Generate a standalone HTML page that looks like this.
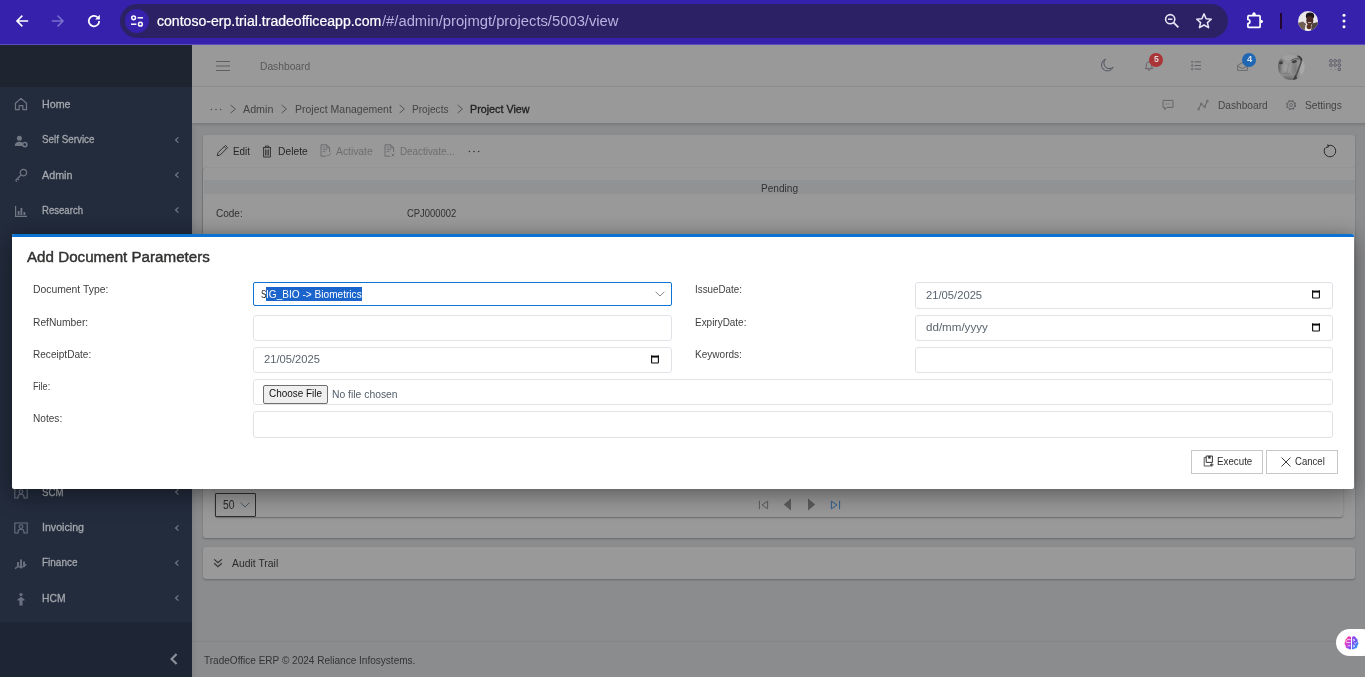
<!DOCTYPE html>
<html><head><meta charset="utf-8"><title>Project View</title>
<style>
html,body{margin:0;padding:0}
body{width:1365px;height:677px;overflow:hidden;position:relative;background:#8b8c8e;font-family:'Liberation Sans',sans-serif;}
svg{display:block;overflow:visible}
</style></head><body>
<div style="position:absolute;left:0px;top:0px;width:1365px;height:44px;background:#3521ac"></div><div style="position:absolute;left:0px;top:44px;width:1365px;height:1px;background:#5b4cc0"></div><svg style="position:absolute;left:14.00px;top:13.00px;" width="16" height="16" viewBox="0 0 16 16"><path d="M13.4 8H3.6M7.8 3.2L3 8L7.8 12.8" fill="none" stroke="#fff" stroke-width="1.6" stroke-linecap="square"/></svg><svg style="position:absolute;left:50.00px;top:13.00px;" width="16" height="16" viewBox="0 0 16 16"><path d="M2.6 8H12.4M8.2 3.2L13 8L8.2 12.8" fill="none" stroke="#7a6fcf" stroke-width="1.6" stroke-linecap="square"/></svg><svg style="position:absolute;left:86.00px;top:13.00px;" width="16" height="16" viewBox="0 0 16 16"><path d="M13.2 8A5.2 5.2 0 1 1 11.6 4.3" fill="none" stroke="#fff" stroke-width="1.7"/><path d="M13.8 1.8V6.4H9.2Z" fill="#fff"/></svg><div style="position:absolute;left:120px;top:4px;width:1108px;height:34px;background:#2c2165;border-radius:17px"></div><div style="position:absolute;left:125px;top:9px;width:24px;height:24px;background:#3521ac;border-radius:12px"></div><svg style="position:absolute;left:129.00px;top:13.00px;" width="16" height="16" viewBox="0 0 16 16"><circle cx="4.6" cy="4.8" r="1.9" fill="none" stroke="#fff" stroke-width="1.5"/><path d="M8.6 4.8H14" stroke="#fff" stroke-width="1.5"/><circle cx="11.4" cy="11.2" r="1.9" fill="none" stroke="#fff" stroke-width="1.5"/><path d="M2 11.2H7.4" stroke="#fff" stroke-width="1.5"/></svg><span style="position:absolute;left:157.30px;top:11.25px;line-height:20px;font-size:14px;font-weight:400;color:#ffffff;white-space:pre;transform-origin:0 50%;transform:scaleX(1.0050);-webkit-text-stroke:.22px #fff;">contoso-erp.trial.tradeofficeapp.com</span><span style="position:absolute;left:381.80px;top:11.25px;line-height:20px;font-size:14px;font-weight:400;color:#b9b3e0;white-space:pre;transform-origin:0 50%;transform:scaleX(1.0553);">/#/admin/projmgt/projects/5003/view</span><svg style="position:absolute;left:1163.00px;top:12.00px;" width="18" height="18" viewBox="0 0 18 18"><circle cx="7.2" cy="7.2" r="4.6" fill="none" stroke="#e9e6f7" stroke-width="1.6"/><path d="M10.6 10.6L15.4 15.4" stroke="#e9e6f7" stroke-width="1.8"/><path d="M5 7.2H9.4" stroke="#e9e6f7" stroke-width="1.5"/></svg><svg style="position:absolute;left:1195.00px;top:12.00px;" width="18" height="18" viewBox="0 0 18 18"><path d="M9 1.9L11.1 6.7L16.3 7.2L12.4 10.6L13.6 15.7L9 13L4.4 15.7L5.6 10.6L1.7 7.2L6.9 6.7Z" fill="none" stroke="#e9e6f7" stroke-width="1.5" stroke-linejoin="round"/></svg><svg style="position:absolute;left:1245.00px;top:10.50px;" width="20" height="20" viewBox="0 0 20 20"><path d="M2.9 5.7Q2.9 4.7 3.9 4.7H14.1Q15.1 4.7 15.1 5.7V15.4Q15.1 16.4 14.1 16.4H3.9Q2.9 16.4 2.9 15.4V12.5A2 2 0 0 0 2.9 8.5Z" fill="none" stroke="#fff" stroke-width="1.7" stroke-linejoin="round"/><path d="M7.2 4.2A1.8 2.9 0 0 1 10.8 4.2ZM15.6 8.7A2.5 1.8 0 0 1 15.6 12.3Z" fill="#fff"/></svg><div style="position:absolute;left:1280px;top:13px;width:2px;height:16px;background:#22062f"></div><svg style="position:absolute;left:1298.00px;top:11.00px;" width="20" height="20" viewBox="0 0 20 20"><defs><clipPath id="ca"><circle cx="10" cy="10" r="10"/></clipPath><filter id="fb" x="-20%" y="-20%" width="140%" height="140%"><feGaussianBlur stdDeviation=".55"/></filter></defs><g clip-path="url(#ca)"><rect width="20" height="20" fill="#e9e7e8"/><g filter="url(#fb)"><path d="M0 12L5 10.5L8 13L7 20H0Z" fill="#6f5f55"/><path d="M14 12.5L20 11V20H13Z" fill="#4f4540"/><path d="M7.5 14L12.5 14L13 20H6.5Z" fill="#f3f1f0"/><ellipse cx="12" cy="5" rx="4.2" ry="3.4" fill="#1d181b"/><ellipse cx="11.8" cy="9.6" rx="3.5" ry="4.4" fill="#4a2c25"/><ellipse cx="11" cy="15.6" rx="2.4" ry="2.6" fill="#5a3428"/><path d="M10 11.6H13.4" stroke="#d8c8c4" stroke-width=".9"/></g></g></svg><svg style="position:absolute;left:1341.00px;top:12.00px;" width="6" height="18" viewBox="0 0 6 18"><circle cx="3" cy="3.2" r="1.5" fill="#fff"/><circle cx="3" cy="9" r="1.5" fill="#fff"/><circle cx="3" cy="14.8" r="1.5" fill="#fff"/></svg><div style="position:absolute;left:0px;top:45px;width:192px;height:42px;background:#1e2430"></div><div style="position:absolute;left:0px;top:87px;width:192px;height:535px;background:#232c3d"></div><div style="position:absolute;left:0px;top:622px;width:192px;height:55px;background:#1e2535"></div><svg style="position:absolute;left:13.00px;top:96.40px;" width="16" height="16" viewBox="0 0 16 16"><path d="M2.5 7.2L8 2.4L13.5 7.2V13.6H9.8V9.6H6.2V13.6H2.5Z" fill="none" stroke="#727883" stroke-width="1.2" stroke-linejoin="round"/></svg><span style="position:absolute;left:42.00px;top:94.20px;line-height:20px;font-size:11px;font-weight:400;-webkit-text-stroke:0.31px #a4a7ac;color:#a4a7ac;white-space:pre;transform-origin:0 50%;transform:scaleX(0.9712);">Home</span><svg style="position:absolute;left:13.00px;top:132.65px;" width="16" height="16" viewBox="0 0 16 16"><circle cx="6.4" cy="5.2" r="2.5" fill="#727883"/><path d="M1.8 13C1.8 10.2 3.6 8.8 6.4 8.8C7.6 8.8 8.6 9.1 9.3 9.6V13Z" fill="#727883"/><circle cx="11.8" cy="11.6" r="2.1" fill="none" stroke="#727883" stroke-width="1.5"/></svg><span style="position:absolute;left:42.00px;top:129.45px;line-height:20px;font-size:11px;font-weight:400;-webkit-text-stroke:0.31px #a4a7ac;color:#a4a7ac;white-space:pre;transform-origin:0 50%;transform:scaleX(0.8943);">Self Service</span><svg style="position:absolute;left:173.20px;top:135.85px;" width="8" height="8" viewBox="0 0 8 8"><path d="M5.4 1.4L2.6 4L5.4 6.6" fill="none" stroke="#727883" stroke-width="1.2"/></svg><svg style="position:absolute;left:13.00px;top:166.90px;" width="16" height="16" viewBox="0 0 16 16"><circle cx="10.4" cy="5.6" r="3.2" fill="none" stroke="#727883" stroke-width="1.2"/><path d="M8 8L2.6 13.4M4.4 11.6L6 13.2M2.6 13.4L3.8 14.6" fill="none" stroke="#727883" stroke-width="1.2"/></svg><span style="position:absolute;left:42.00px;top:164.70px;line-height:20px;font-size:11px;font-weight:400;-webkit-text-stroke:0.31px #a4a7ac;color:#a4a7ac;white-space:pre;transform-origin:0 50%;transform:scaleX(0.9780);">Admin</span><svg style="position:absolute;left:173.20px;top:171.10px;" width="8" height="8" viewBox="0 0 8 8"><path d="M5.4 1.4L2.6 4L5.4 6.6" fill="none" stroke="#727883" stroke-width="1.2"/></svg><svg style="position:absolute;left:13.00px;top:203.15px;" width="16" height="16" viewBox="0 0 16 16"><path d="M2.6 3V13.4H14" fill="none" stroke="#727883" stroke-width="1.2"/><path d="M5.6 8V12M8.4 5V12M11.4 9V12" stroke="#727883" stroke-width="1.8"/></svg><span style="position:absolute;left:42.00px;top:199.95px;line-height:20px;font-size:11px;font-weight:400;-webkit-text-stroke:0.31px #a4a7ac;color:#a4a7ac;white-space:pre;transform-origin:0 50%;transform:scaleX(0.8709);">Research</span><svg style="position:absolute;left:173.20px;top:206.35px;" width="8" height="8" viewBox="0 0 8 8"><path d="M5.4 1.4L2.6 4L5.4 6.6" fill="none" stroke="#727883" stroke-width="1.2"/></svg><svg style="position:absolute;left:13.00px;top:485.15px;" width="16" height="16" viewBox="0 0 16 16"><path d="M5 13H1.8V3H14.2V13H11" fill="none" stroke="#69707d" stroke-width="1.1"/><circle cx="8" cy="6.6" r="1.9" fill="none" stroke="#69707d" stroke-width="1.1"/><path d="M5 13.4V12C5 10.2 6.2 9.2 8 9.2C9.8 9.2 11 10.2 11 12V13.4" fill="none" stroke="#69707d" stroke-width="1.1"/></svg><span style="position:absolute;left:42.00px;top:481.95px;line-height:20px;font-size:11px;font-weight:400;-webkit-text-stroke:0.31px #a4a7ac;color:#a4a7ac;white-space:pre;transform-origin:0 50%;transform:scaleX(0.8792);">SCM</span><svg style="position:absolute;left:173.20px;top:488.35px;" width="8" height="8" viewBox="0 0 8 8"><path d="M5.4 1.4L2.6 4L5.4 6.6" fill="none" stroke="#727883" stroke-width="1.2"/></svg><svg style="position:absolute;left:13.00px;top:520.40px;" width="16" height="16" viewBox="0 0 16 16"><path d="M5 13H1.8V3H14.2V13H11" fill="none" stroke="#69707d" stroke-width="1.1"/><circle cx="8" cy="6.6" r="1.9" fill="none" stroke="#69707d" stroke-width="1.1"/><path d="M5 13.4V12C5 10.2 6.2 9.2 8 9.2C9.8 9.2 11 10.2 11 12V13.4" fill="none" stroke="#69707d" stroke-width="1.1"/></svg><span style="position:absolute;left:42.00px;top:517.20px;line-height:20px;font-size:11px;font-weight:400;-webkit-text-stroke:0.31px #a4a7ac;color:#a4a7ac;white-space:pre;transform-origin:0 50%;transform:scaleX(0.9673);">Invoicing</span><svg style="position:absolute;left:173.20px;top:523.60px;" width="8" height="8" viewBox="0 0 8 8"><path d="M5.4 1.4L2.6 4L5.4 6.6" fill="none" stroke="#727883" stroke-width="1.2"/></svg><svg style="position:absolute;left:13.00px;top:555.65px;" width="16" height="16" viewBox="0 0 16 16"><path d="M4 6H6V11H4ZM7 3.6H9V11H7ZM10 5.4H12V11H10Z" fill="#69707d"/><path d="M2 12.6L5.4 10.2L8 12L13.4 8.4" fill="none" stroke="#69707d" stroke-width="1.4"/></svg><span style="position:absolute;left:42.00px;top:552.45px;line-height:20px;font-size:11px;font-weight:400;-webkit-text-stroke:0.31px #a4a7ac;color:#a4a7ac;white-space:pre;transform-origin:0 50%;transform:scaleX(0.9070);">Finance</span><svg style="position:absolute;left:173.20px;top:558.85px;" width="8" height="8" viewBox="0 0 8 8"><path d="M5.4 1.4L2.6 4L5.4 6.6" fill="none" stroke="#727883" stroke-width="1.2"/></svg><svg style="position:absolute;left:13.00px;top:590.90px;" width="16" height="16" viewBox="0 0 16 16"><circle cx="8" cy="3.6" r="1.7" fill="#69707d"/><path d="M4.4 8.4L8 5.8L11.6 8.4V9.6H9.6V14.4H6.4V9.6H4.4Z" fill="#69707d"/></svg><span style="position:absolute;left:42.00px;top:587.70px;line-height:20px;font-size:11px;font-weight:400;-webkit-text-stroke:0.31px #a4a7ac;color:#a4a7ac;white-space:pre;transform-origin:0 50%;transform:scaleX(0.9377);">HCM</span><svg style="position:absolute;left:173.20px;top:594.10px;" width="8" height="8" viewBox="0 0 8 8"><path d="M5.4 1.4L2.6 4L5.4 6.6" fill="none" stroke="#727883" stroke-width="1.2"/></svg><svg style="position:absolute;left:167.50px;top:651.50px;" width="12" height="14" viewBox="0 0 12 14"><path d="M8.6 2L3.6 7L8.6 12" fill="none" stroke="#8b909a" stroke-width="2.2"/></svg><div style="position:absolute;left:192px;top:45px;width:1173px;height:78px;background:#999999"></div><div style="position:absolute;left:192px;top:86px;width:1173px;height:1px;background:#8c8c8c"></div><div style="position:absolute;left:192px;top:123px;width:1173px;height:4px;background:linear-gradient(180deg,#78797b,#8b8c8e)"></div><div style="position:absolute;left:192px;top:127px;width:1173px;height:550px;background:#8b8c8e"></div><svg style="position:absolute;left:216.00px;top:59.50px;" width="14" height="12" viewBox="0 0 14 12"><path d="M0 1.5H14M0 6H14M0 10.5H14" stroke="#5f5f5f" stroke-width="1.1"/></svg><span style="position:absolute;left:259.80px;top:56.20px;line-height:20px;font-size:11px;font-weight:400;color:#595959;white-space:pre;transform-origin:0 50%;transform:scaleX(0.9326);">Dashboard</span><svg style="position:absolute;left:210.00px;top:107.50px;" width="12" height="3" viewBox="0 0 12 3"><circle cx="1.4" cy="1.5" r=".75" fill="#505050"/><circle cx="6" cy="1.5" r=".75" fill="#505050"/><circle cx="10.6" cy="1.5" r=".75" fill="#505050"/></svg><svg style="position:absolute;left:228.60px;top:104.20px;" width="8" height="10" viewBox="0 0 8 10"><path d="M1.6 .9L6.4 5L1.6 9.1" fill="none" stroke="#555" stroke-width="1"/></svg><span style="position:absolute;left:243.00px;top:99.20px;line-height:20px;font-size:11px;font-weight:400;color:#444;white-space:pre;transform-origin:0 50%;transform:scaleX(0.9747);">Admin</span><svg style="position:absolute;left:280.00px;top:104.20px;" width="8" height="10" viewBox="0 0 8 10"><path d="M1.6 .9L6.4 5L1.6 9.1" fill="none" stroke="#555" stroke-width="1"/></svg><span style="position:absolute;left:294.50px;top:99.20px;line-height:20px;font-size:11px;font-weight:400;color:#444;white-space:pre;transform-origin:0 50%;transform:scaleX(0.9537);">Project Management</span><svg style="position:absolute;left:398.30px;top:104.20px;" width="8" height="10" viewBox="0 0 8 10"><path d="M1.6 .9L6.4 5L1.6 9.1" fill="none" stroke="#555" stroke-width="1"/></svg><span style="position:absolute;left:412.40px;top:99.20px;line-height:20px;font-size:11px;font-weight:400;color:#444;white-space:pre;transform-origin:0 50%;transform:scaleX(0.9182);">Projects</span><svg style="position:absolute;left:455.60px;top:104.20px;" width="8" height="10" viewBox="0 0 8 10"><path d="M1.6 .9L6.4 5L1.6 9.1" fill="none" stroke="#555" stroke-width="1"/></svg><span style="position:absolute;left:470.00px;top:99.20px;line-height:20px;font-size:11px;font-weight:400;-webkit-text-stroke:0.31px #1e1e1e;color:#1e1e1e;white-space:pre;transform-origin:0 50%;transform:scaleX(0.9764);">Project View</span><svg style="position:absolute;left:1100.40px;top:58.40px;" width="14" height="14" viewBox="0 0 14 14"><path d="M5.6 1.2A6 6 0 1 0 13 9.2A5.2 5.2 0 0 1 5.6 1.2Z" fill="none" stroke="#50545f" stroke-width="1" stroke-linejoin="round"/></svg><svg style="position:absolute;left:1144.20px;top:60.80px;" width="10" height="10" viewBox="0 0 10 10"><path d="M5 .8C3.4 .8 2.4 2 2.4 3.6V5.8L1.2 7.6H8.8L7.6 5.8V3.6C7.6 2 6.6 .8 5 .8ZM4 8.4A1 1 0 0 0 6 8.4" fill="none" stroke="#606066" stroke-width=".95"/></svg><div style="position:absolute;left:1149px;top:53px;width:14px;height:14px;background:#a93538;border-radius:7px"></div><span style="position:absolute;left:1153.80px;top:49.46px;line-height:20px;font-size:9px;font-weight:700;color:#e0d6d7;white-space:pre;transform-origin:0 50%;transform:scaleX(0.9570);">5</span><svg style="position:absolute;left:1191.00px;top:60.80px;" width="10" height="9" viewBox="0 0 10 9"><path d="M3.6 .9H10M3.6 4.5H10M3.6 8.1H10" stroke="#5a5a60" stroke-width=".9"/><circle cx="1.2" cy=".9" r=".8" fill="none" stroke="#5a5a60" stroke-width=".7"/><circle cx="1.2" cy="4.5" r=".8" fill="none" stroke="#5a5a60" stroke-width=".7"/><circle cx="1.2" cy="8.1" r=".8" fill="none" stroke="#5a5a60" stroke-width=".7"/></svg><svg style="position:absolute;left:1237.00px;top:61.70px;" width="11" height="9" viewBox="0 0 11 9"><path d="M.6 3.4L5.5 .5L10.4 3.4V8.5H.6ZM.6 4.2L5.5 6.6L10.4 4.2" fill="none" stroke="#66666c" stroke-width=".9"/></svg><div style="position:absolute;left:1242px;top:53px;width:14px;height:14px;background:#2067b3;border-radius:7px"></div><span style="position:absolute;left:1246.50px;top:49.46px;line-height:20px;font-size:9px;font-weight:700;color:#d6e0ea;white-space:pre;transform-origin:0 50%;transform:scaleX(1.0368);">4</span><svg style="position:absolute;left:1277.70px;top:52.90px;" width="27" height="27" viewBox="0 0 27 27"><defs><clipPath id="cb"><circle cx="13.5" cy="13.5" r="13.5"/></clipPath><filter id="fc" x="-20%" y="-20%" width="140%" height="140%"><feGaussianBlur stdDeviation=".75"/></filter><filter id="fd" x="-30%" y="-30%" width="160%" height="160%"><feGaussianBlur stdDeviation="1.6"/></filter></defs><g clip-path="url(#cb)"><rect width="27" height="27" fill="#8e8e8e"/><g filter="url(#fd)"><ellipse cx="11" cy="4.5" rx="8" ry="4" fill="#a0a0a0"/><ellipse cx="8.5" cy="15" rx="4.5" ry="5" fill="#9c9c9c"/><ellipse cx="24.5" cy="15" rx="3.6" ry="9" fill="#a9a9a9"/><ellipse cx=".5" cy="13" rx="2.6" ry="10" fill="#666"/><ellipse cx="9" cy="26.5" rx="8" ry="3" fill="#6a6a6a"/><ellipse cx="17" cy="16" rx="2.5" ry="6" fill="#7c7c7c"/></g><g filter="url(#fc)"><ellipse cx="3" cy="9.8" rx="2" ry="1.5" fill="#3d3d3d"/><path d="M.5 8.2C2 6.8 4.5 6.8 6.2 8" fill="none" stroke="#6a6a6a" stroke-width=".9"/><ellipse cx="16.4" cy="8.6" rx="2.6" ry="1.5" fill="#404040" transform="rotate(-14 16.4 8.6)"/><path d="M12.8 8C15 5.6 19 5 21.5 6.4" fill="none" stroke="#5e5e5e" stroke-width="1.1"/><path d="M19.5 3C23.2 4.4 24 7.2 22.6 10.4C21 14.4 19.6 20 16 27" fill="none" stroke="#525252" stroke-width="1.7"/><path d="M20.5 3.2C22.2 3.8 23.6 5.2 23.6 7.4" fill="none" stroke="#3a3a3a" stroke-width="1.7"/><path d="M14.6 27L17.6 21.6L19.6 27Z" fill="#404040"/><path d="M10.2 10C10.6 14 10 17 8.6 19.4" fill="none" stroke="#8a8a8a" stroke-width="1.1"/><path d="M5 20.6C7 19.8 9.5 20 11 21.2" fill="none" stroke="#7c7c7c" stroke-width="1.2"/><path d="M6 25.4C8 24.6 11 25 13 26.4" fill="none" stroke="#6f6f6f" stroke-width="1.4"/></g></g></svg><svg style="position:absolute;left:1329.10px;top:59.00px;" width="13" height="13" viewBox="0 0 13 13"><rect x="0.7" y="0.7" width="2.4" height="2.4" rx=".5" fill="none" stroke="#5c5a6a" stroke-width="1"/><rect x="4.9" y="0.7" width="2.4" height="2.4" rx=".5" fill="none" stroke="#5c5a6a" stroke-width="1"/><rect x="9.1" y="0.7" width="2.4" height="2.4" rx=".5" fill="none" stroke="#5c5a6a" stroke-width="1"/><rect x="0.7" y="4.9" width="2.4" height="2.4" rx=".5" fill="none" stroke="#5c5a6a" stroke-width="1"/><rect x="4.9" y="4.9" width="2.4" height="2.4" rx=".5" fill="none" stroke="#5c5a6a" stroke-width="1"/><rect x="9.1" y="4.9" width="2.4" height="2.4" rx=".5" fill="none" stroke="#5c5a6a" stroke-width="1"/><circle cx="1.9" cy="10.3" r=".6" fill="#77707a"/><circle cx="6.1" cy="10.3" r=".6" fill="#77707a"/><rect x="9.1" y="9.1" width="2.4" height="2.4" rx=".5" fill="none" stroke="#5c5a6a" stroke-width="1"/></svg><svg style="position:absolute;left:1162.40px;top:98.50px;" width="12" height="12" viewBox="0 0 12 12"><path d="M1 1.4H11V8.4H5L2.6 10.6V8.4H1Z" fill="none" stroke="#666" stroke-width="1"/><path d="M3.6 5H8.4" stroke="#666" stroke-width="1" stroke-dasharray="1 1.2"/></svg><svg style="position:absolute;left:1196.60px;top:98.80px;" width="12" height="12" viewBox="0 0 12 12"><path d="M1.6 10.2L4.2 4.8L7.6 8L10.4 2" fill="none" stroke="#5a5a5e" stroke-width=".9"/><circle cx="1.6" cy="10.2" r=".9" fill="#999" stroke="#5a5a5e" stroke-width=".7"/><circle cx="4.2" cy="4.8" r=".9" fill="#999" stroke="#5a5a5e" stroke-width=".7"/><circle cx="7.6" cy="8" r=".9" fill="#999" stroke="#5a5a5e" stroke-width=".7"/><circle cx="10.4" cy="2" r=".9" fill="#999" stroke="#5a5a5e" stroke-width=".7"/></svg><span style="position:absolute;left:1217.50px;top:95.20px;line-height:20px;font-size:11px;font-weight:400;color:#454547;white-space:pre;transform-origin:0 50%;transform:scaleX(0.9233);">Dashboard</span><svg style="position:absolute;left:1284.50px;top:98.50px;" width="12" height="12" viewBox="0 0 12 12"><circle cx="6" cy="6" r="4.5" fill="none" stroke="#606064" stroke-width="1.1" stroke-dasharray="2.1 1.43"/><circle cx="6" cy="6" r="3.8" fill="none" stroke="#606064" stroke-width=".8"/><circle cx="6" cy="6" r="1.5" fill="none" stroke="#606064" stroke-width=".8"/></svg><span style="position:absolute;left:1305.20px;top:95.20px;line-height:20px;font-size:11px;font-weight:400;color:#454547;white-space:pre;transform-origin:0 50%;transform:scaleX(0.9258);">Settings</span><div style="position:absolute;left:203px;top:135px;width:1152px;height:403px;background:#999999;border-radius:3px;box-shadow:0 1px 2px rgba(0,0,0,.25)"></div><div style="position:absolute;left:203px;top:168px;width:1152px;height:300px;background:#999;border-top-left-radius:3px;box-shadow:0 -1px 1px rgba(0,0,0,.035),-1px 0 0 rgba(0,0,0,.10)"></div><div style="position:absolute;left:204px;top:180px;width:1151px;height:14px;background:#919294"></div><span style="position:absolute;left:760.50px;top:178.20px;line-height:20px;font-size:11px;font-weight:400;color:#333;white-space:pre;transform-origin:0 50%;transform:scaleX(0.9164);">Pending</span><span style="position:absolute;left:215.50px;top:203.20px;line-height:20px;font-size:11px;font-weight:400;color:#303030;white-space:pre;transform-origin:0 50%;transform:scaleX(0.9094);">Code:</span><span style="position:absolute;left:407.20px;top:203.20px;line-height:20px;font-size:11px;font-weight:400;color:#303030;white-space:pre;transform-origin:0 50%;transform:scaleX(0.8557);">CPJ000002</span><svg style="position:absolute;left:216.30px;top:144.20px;" width="13" height="13" viewBox="0 0 13 13"><path d="M9.4 1.4L11.6 3.6L4.2 11L1.2 11.8L2 8.8Z" fill="none" stroke="#333" stroke-width="1" stroke-linejoin="round"/><path d="M8.2 2.6L10.4 4.8" stroke="#333" stroke-width=".8"/></svg><span style="position:absolute;left:233.20px;top:141.40px;line-height:20px;font-size:11px;font-weight:400;color:#262626;white-space:pre;transform-origin:0 50%;transform:scaleX(0.8962);">Edit</span><svg style="position:absolute;left:262.30px;top:144.50px;" width="10" height="13" viewBox="0 0 10 13"><path d="M.8 2.6H9.2M3.4 2.4V1H6.6V2.4M1.6 2.8V12H8.4V2.8" fill="none" stroke="#333" stroke-width="1"/><path d="M3.8 4.6V10.4M6.2 4.6V10.4" stroke="#333" stroke-width="1.3"/></svg><span style="position:absolute;left:278.30px;top:141.40px;line-height:20px;font-size:11px;font-weight:400;color:#262626;white-space:pre;transform-origin:0 50%;transform:scaleX(0.9341);">Delete</span><svg style="position:absolute;left:319.50px;top:144.30px;" width="11" height="13" viewBox="0 0 11 13"><path d="M1 .8H6.6L9.6 3.8V8M1 .8V12.2H6.2M6.6 .8V3.8H9.6" fill="none" stroke="#6c6c70" stroke-width="1" stroke-linejoin="miter"/><path d="M2.8 5.4H7M2.8 7.6H5.6M2.8 3.2H4.8" stroke="#6c6c70" stroke-width=".9"/><path d="M7 10.6L8.4 12L10.8 9.2" fill="none" stroke="#6c6c70" stroke-width=".9"/></svg><span style="position:absolute;left:335.70px;top:141.40px;line-height:20px;font-size:11px;font-weight:400;color:#6e6e72;white-space:pre;transform-origin:0 50%;transform:scaleX(0.9376);">Activate</span><svg style="position:absolute;left:384.30px;top:144.30px;" width="11" height="13" viewBox="0 0 11 13"><path d="M1 .8H6.6L9.6 3.8V8M1 .8V12.2H6.2M6.6 .8V3.8H9.6" fill="none" stroke="#6c6c70" stroke-width="1" stroke-linejoin="miter"/><path d="M2.8 5.4H7M2.8 7.6H5.6M2.8 3.2H4.8" stroke="#6c6c70" stroke-width=".9"/><path d="M7.6 9.6L10.4 12.4M10.4 9.6L7.6 12.4" fill="none" stroke="#6c6c70" stroke-width=".9"/></svg><span style="position:absolute;left:400.30px;top:141.40px;line-height:20px;font-size:11px;font-weight:400;color:#6e6e72;white-space:pre;transform-origin:0 50%;transform:scaleX(0.8947);">Deactivate...</span><svg style="position:absolute;left:468.40px;top:149.50px;" width="12" height="3" viewBox="0 0 12 3"><circle cx="1.4" cy="1.5" r=".8" fill="#333"/><circle cx="6" cy="1.5" r=".8" fill="#333"/><circle cx="10.6" cy="1.5" r=".8" fill="#333"/></svg><svg style="position:absolute;left:1323.00px;top:144.00px;" width="14" height="14" viewBox="0 0 14 14"><path d="M5.2 1.5A5.8 5.8 0 1 1 2 4" fill="none" stroke="#2a2a2a" stroke-width="1"/><path d="M5.4 .2V2.8H2.6" fill="none" stroke="#2a2a2a" stroke-width="1" transform="rotate(-18 5.4 2.8)"/></svg><div style="position:absolute;left:215px;top:480px;width:1128px;height:37px;background:#999;border-bottom-left-radius:3px;border-bottom-right-radius:3px;box-shadow:0 1px 1.5px rgba(0,0,0,.3)"></div><div style="position:absolute;left:215px;top:493px;width:41px;height:24px;border:1px solid #2e2e2e;box-sizing:border-box;border-radius:1px"></div><span style="position:absolute;left:222.60px;top:495.22px;line-height:20px;font-size:12px;font-weight:400;color:#2a2a2a;white-space:pre;transform-origin:0 50%;transform:scaleX(0.8608);">50</span><svg style="position:absolute;left:240.10px;top:501.60px;" width="10" height="6" viewBox="0 0 10 6"><path d="M.5 .6L5 5L9.5 .6" fill="none" stroke="#4a5866" stroke-width="1"/></svg><svg style="position:absolute;left:757.70px;top:499.80px;" width="11" height="10" viewBox="0 0 11 10"><path d="M1.4 .8V9.2" stroke="#5c5d5f" stroke-width="1"/><path d="M9.6 1.2L4 5L9.6 8.8Z" fill="none" stroke="#5c5d5f" stroke-width="1"/></svg><svg style="position:absolute;left:782.50px;top:498.30px;" width="9" height="13" viewBox="0 0 9 13"><path d="M8 .4L.8 6.5L8 12.6Z" fill="#5c5d5f"/></svg><svg style="position:absolute;left:807.20px;top:498.30px;" width="9" height="13" viewBox="0 0 9 13"><path d="M1 .4L8.2 6.5L1 12.6Z" fill="#5c5d5f"/></svg><svg style="position:absolute;left:829.90px;top:499.80px;" width="11" height="10" viewBox="0 0 11 10"><path d="M9.6 .8V9.2" stroke="#2f5f8f" stroke-width="1"/><path d="M1.4 1.2L7 5L1.4 8.8Z" fill="none" stroke="#2f5f8f" stroke-width="1"/></svg><div style="position:absolute;left:203px;top:547px;width:1152px;height:32px;background:#999999;border-radius:3px;box-shadow:0 1px 2px rgba(0,0,0,.25)"></div><svg style="position:absolute;left:213.30px;top:558.00px;" width="10" height="10" viewBox="0 0 10 10"><path d="M1.2 1.4L5 4.8L8.8 1.4M1.2 5.2L5 8.6L8.8 5.2" fill="none" stroke="#333" stroke-width="1.2"/></svg><span style="position:absolute;left:232.00px;top:553.11px;line-height:20px;font-size:11.5px;font-weight:400;color:#2b2b2b;white-space:pre;transform-origin:0 50%;transform:scaleX(0.9034);">Audit Trail</span><div style="position:absolute;left:192px;top:641px;width:1173px;height:1px;background:#848587"></div><span style="position:absolute;left:204.10px;top:649.51px;line-height:20px;font-size:11.5px;font-weight:400;color:#333436;white-space:pre;transform-origin:0 50%;transform:scaleX(0.8728);">TradeOffice ERP © 2024 Reliance Infosystems.</span><div style="position:absolute;left:192px;top:127px;width:6px;height:550px;background:linear-gradient(90deg,rgba(0,0,0,.06),rgba(0,0,0,0))"></div><div style="position:absolute;left:1336px;top:629px;width:40px;height:27px;background:#fff;border-radius:13.5px"></div><svg style="position:absolute;left:1344.10px;top:635.50px;" width="15" height="14" viewBox="0 0 15 14"><defs><linearGradient id="bl" x1="0" y1="0" x2=".7" y2="1"><stop offset=".08" stop-color="#ff9a2e"/><stop offset=".34" stop-color="#ee3fb4"/><stop offset=".7" stop-color="#c03fe0"/><stop offset="1" stop-color="#7a4cf2"/></linearGradient><linearGradient id="br" x1="0" y1="0" x2=".6" y2="1"><stop offset="0" stop-color="#a14be6"/><stop offset=".55" stop-color="#6a58f5"/><stop offset="1" stop-color="#2f9cff"/></linearGradient></defs><path d="M7 1C5.6 -.2 3.4 .3 3 2.2C1.4 2.8 .9 4.4 1.5 5.6C.2 6.8 .2 8.6 1.6 9.6C1.4 11.6 3 13 4.6 12.6C5.4 13.8 6.6 13.6 7 13Z" fill="url(#bl)"/><path d="M8 1C9.4 -.2 11.6 .3 12 2.2C13.6 2.8 14.1 4.4 13.5 5.6C14.8 6.8 14.8 8.6 13.4 9.6C13.6 11.6 12 13 10.4 12.6C9.600000000000001 13.8 8.4 13.6 8 13Z" fill="url(#br)"/><path d="M3.4 3.6H6.6M2.2 6.6H6.4M3.6 9.8H6.4M3.4 3.6C2.6 4 2.4 4.8 2.6 5.4" fill="none" stroke="#fff" stroke-width=".75"/><path d="M8.8 3.2L11 4.2L8.8 5.2M10 6.6L11.4 7.8L12.8 6.2M8.8 9L11 10L8.8 11" fill="none" stroke="#fff" stroke-width=".7"/></svg><div style="position:absolute;left:12px;top:234px;width:1342px;height:255px;background:#fff;border-radius:2px;box-shadow:0 7px 24px rgba(0,0,0,.33),0 0 16px rgba(0,0,0,.16)"></div><div style="position:absolute;left:12px;top:234px;width:1342px;height:3px;background:#0b72d2;border-radius:2px 2px 0 0"></div><span style="position:absolute;left:27.40px;top:246.78px;line-height:20px;font-size:15.4px;font-weight:400;-webkit-text-stroke:0.43px #323130;color:#323130;white-space:pre;transform-origin:0 50%;transform:scaleX(0.9852);">Add Document Parameters</span><span style="position:absolute;left:33.30px;top:279.20px;line-height:20px;font-size:11px;font-weight:400;color:#3f3f3f;white-space:pre;transform-origin:0 50%;transform:scaleX(0.9424);">Document Type:</span><span style="position:absolute;left:33.30px;top:312.20px;line-height:20px;font-size:11px;font-weight:400;color:#3f3f3f;white-space:pre;transform-origin:0 50%;transform:scaleX(0.9309);">RefNumber:</span><span style="position:absolute;left:33.30px;top:344.20px;line-height:20px;font-size:11px;font-weight:400;color:#3f3f3f;white-space:pre;transform-origin:0 50%;transform:scaleX(0.9152);">ReceiptDate:</span><span style="position:absolute;left:33.30px;top:376.20px;line-height:20px;font-size:11px;font-weight:400;color:#3f3f3f;white-space:pre;transform-origin:0 50%;transform:scaleX(0.8277);">File:</span><span style="position:absolute;left:33.30px;top:408.20px;line-height:20px;font-size:11px;font-weight:400;color:#3f3f3f;white-space:pre;transform-origin:0 50%;transform:scaleX(0.9183);">Notes:</span><span style="position:absolute;left:694.60px;top:279.20px;line-height:20px;font-size:11px;font-weight:400;color:#3f3f3f;white-space:pre;transform-origin:0 50%;transform:scaleX(0.8917);">IssueDate:</span><span style="position:absolute;left:694.60px;top:312.20px;line-height:20px;font-size:11px;font-weight:400;color:#3f3f3f;white-space:pre;transform-origin:0 50%;transform:scaleX(0.9040);">ExpiryDate:</span><span style="position:absolute;left:694.60px;top:344.20px;line-height:20px;font-size:11px;font-weight:400;color:#3f3f3f;white-space:pre;transform-origin:0 50%;transform:scaleX(0.9132);">Keywords:</span><div style="position:absolute;left:253px;top:282px;width:419px;height:24px;border:1px solid #0c74d4;box-sizing:border-box;border-radius:2px;background:#fff"></div><span style="position:absolute;left:260.60px;top:284.20px;line-height:20px;font-size:11px;font-weight:400;color:#222;white-space:pre;transform-origin:0 50%;transform:scaleX(0.7489);">S</span><div style="position:absolute;left:266px;top:287px;width:96.4px;height:13.7px;background:#1a64cc"></div><span style="position:absolute;left:266.30px;top:284.20px;line-height:20px;font-size:11px;font-weight:400;color:#ffffff;white-space:pre;transform-origin:0 50%;transform:scaleX(0.9181);">IG_BIO -&gt; Biometrics</span><svg style="position:absolute;left:654.70px;top:290.50px;" width="10" height="6" viewBox="0 0 10 6"><path d="M.6 .8L5 5L9.4 .8" fill="none" stroke="#8a8a8a" stroke-width="1"/></svg><div style="position:absolute;left:253px;top:315px;width:419px;height:26px;border:1px solid #dfe3e8;box-sizing:border-box;border-radius:3px;background:#fff"></div><div style="position:absolute;left:253px;top:347px;width:419px;height:26px;border:1px solid #dfe3e8;box-sizing:border-box;border-radius:3px;background:#fff"></div><div style="position:absolute;left:253px;top:379px;width:1080px;height:26px;border:1px solid #dfe3e8;box-sizing:border-box;border-radius:3px;background:#fff"></div><div style="position:absolute;left:253px;top:411px;width:1080px;height:27px;border:1px solid #dfe3e8;box-sizing:border-box;border-radius:3px;background:#fff"></div><div style="position:absolute;left:915px;top:282px;width:418px;height:27px;border:1px solid #dfe3e8;box-sizing:border-box;border-radius:3px;background:#fff"></div><div style="position:absolute;left:915px;top:315px;width:418px;height:26px;border:1px solid #dfe3e8;box-sizing:border-box;border-radius:3px;background:#fff"></div><div style="position:absolute;left:915px;top:347px;width:418px;height:26px;border:1px solid #dfe3e8;box-sizing:border-box;border-radius:3px;background:#fff"></div><span style="position:absolute;left:264.30px;top:349.21px;line-height:20px;font-size:11.5px;font-weight:400;color:#59636e;white-space:pre;transform-origin:0 50%;transform:scaleX(0.9729);">21/05/2025</span><span style="position:absolute;left:925.60px;top:285.11px;line-height:20px;font-size:11.5px;font-weight:400;color:#59636e;white-space:pre;transform-origin:0 50%;transform:scaleX(0.9746);">21/05/2025</span><span style="position:absolute;left:925.60px;top:316.81px;line-height:20px;font-size:11.5px;font-weight:400;color:#59636e;white-space:pre;transform-origin:0 50%;transform:scaleX(1.0074);">dd/mm/yyyy</span><svg style="position:absolute;left:651.20px;top:354.65px;" width="8" height="8.5" viewBox="0 0 8 8.5"><path d="M.6 1.6H7.4V7.4A.6 .6 0 0 1 6.8 8H1.2A.6 .6 0 0 1 .6 7.4Z" fill="none" stroke="#0c0c0c" stroke-width="1.1"/><path d="M.2 1.5H7.8" stroke="#0c0c0c" stroke-width="1.8"/><path d="M.6 .2V1M7.4 .2V1" stroke="#0c0c0c" stroke-width=".9"/></svg><svg style="position:absolute;left:1312.00px;top:290.45px;" width="8" height="8.5" viewBox="0 0 8 8.5"><path d="M.6 1.6H7.4V7.4A.6 .6 0 0 1 6.8 8H1.2A.6 .6 0 0 1 .6 7.4Z" fill="none" stroke="#0c0c0c" stroke-width="1.1"/><path d="M.2 1.5H7.8" stroke="#0c0c0c" stroke-width="1.8"/><path d="M.6 .2V1M7.4 .2V1" stroke="#0c0c0c" stroke-width=".9"/></svg><svg style="position:absolute;left:1312.00px;top:323.45px;" width="8" height="8.5" viewBox="0 0 8 8.5"><path d="M.6 1.6H7.4V7.4A.6 .6 0 0 1 6.8 8H1.2A.6 .6 0 0 1 .6 7.4Z" fill="none" stroke="#0c0c0c" stroke-width="1.1"/><path d="M.2 1.5H7.8" stroke="#0c0c0c" stroke-width="1.8"/><path d="M.6 .2V1M7.4 .2V1" stroke="#0c0c0c" stroke-width=".9"/></svg><div style="position:absolute;left:263px;top:385px;width:65px;height:19px;background:#efefef;border:1px solid #6f6f6f;box-sizing:border-box;border-radius:2px"></div><span style="position:absolute;left:269.10px;top:382.99px;line-height:20px;font-size:10.5px;font-weight:400;color:#111;white-space:pre;transform-origin:0 50%;transform:scaleX(0.9459);">Choose File</span><span style="position:absolute;left:331.50px;top:384.19px;line-height:20px;font-size:10.5px;font-weight:400;color:#525d69;white-space:pre;transform-origin:0 50%;transform:scaleX(0.9858);">No file chosen</span><div style="position:absolute;left:1191px;top:450px;width:72px;height:24px;border:1px solid #c8c8c8;box-sizing:border-box;background:#fff"></div><div style="position:absolute;left:1266px;top:450px;width:72px;height:24px;border:1px solid #c8c8c8;box-sizing:border-box;background:#fff"></div><svg style="position:absolute;left:1203.30px;top:455.20px;" width="11" height="12" viewBox="0 0 11 12"><path d="M3 2.6H1.2V11H7.6V9.8" fill="none" stroke="#444" stroke-width=".9"/><path d="M3.2 1H9.4V7.4H3.2Z" fill="none" stroke="#333" stroke-width="1"/><path d="M5.2 1V3.6H7.6V1" fill="#333"/><path d="M8.8 8.2V11.6M7.1 9.9H10.5" stroke="#333" stroke-width="1"/></svg><span style="position:absolute;left:1217.40px;top:451.20px;line-height:20px;font-size:11px;font-weight:400;color:#2f2f2f;white-space:pre;transform-origin:0 50%;transform:scaleX(0.8881);">Execute</span><svg style="position:absolute;left:1281.10px;top:456.70px;" width="10" height="10" viewBox="0 0 10 10"><path d="M.5 .5L9.5 9.5M9.5 .5L.5 9.5" stroke="#333" stroke-width=".95"/></svg><span style="position:absolute;left:1295.00px;top:451.20px;line-height:20px;font-size:11px;font-weight:400;color:#2f2f2f;white-space:pre;transform-origin:0 50%;transform:scaleX(0.8701);">Cancel</span>
</body></html>
